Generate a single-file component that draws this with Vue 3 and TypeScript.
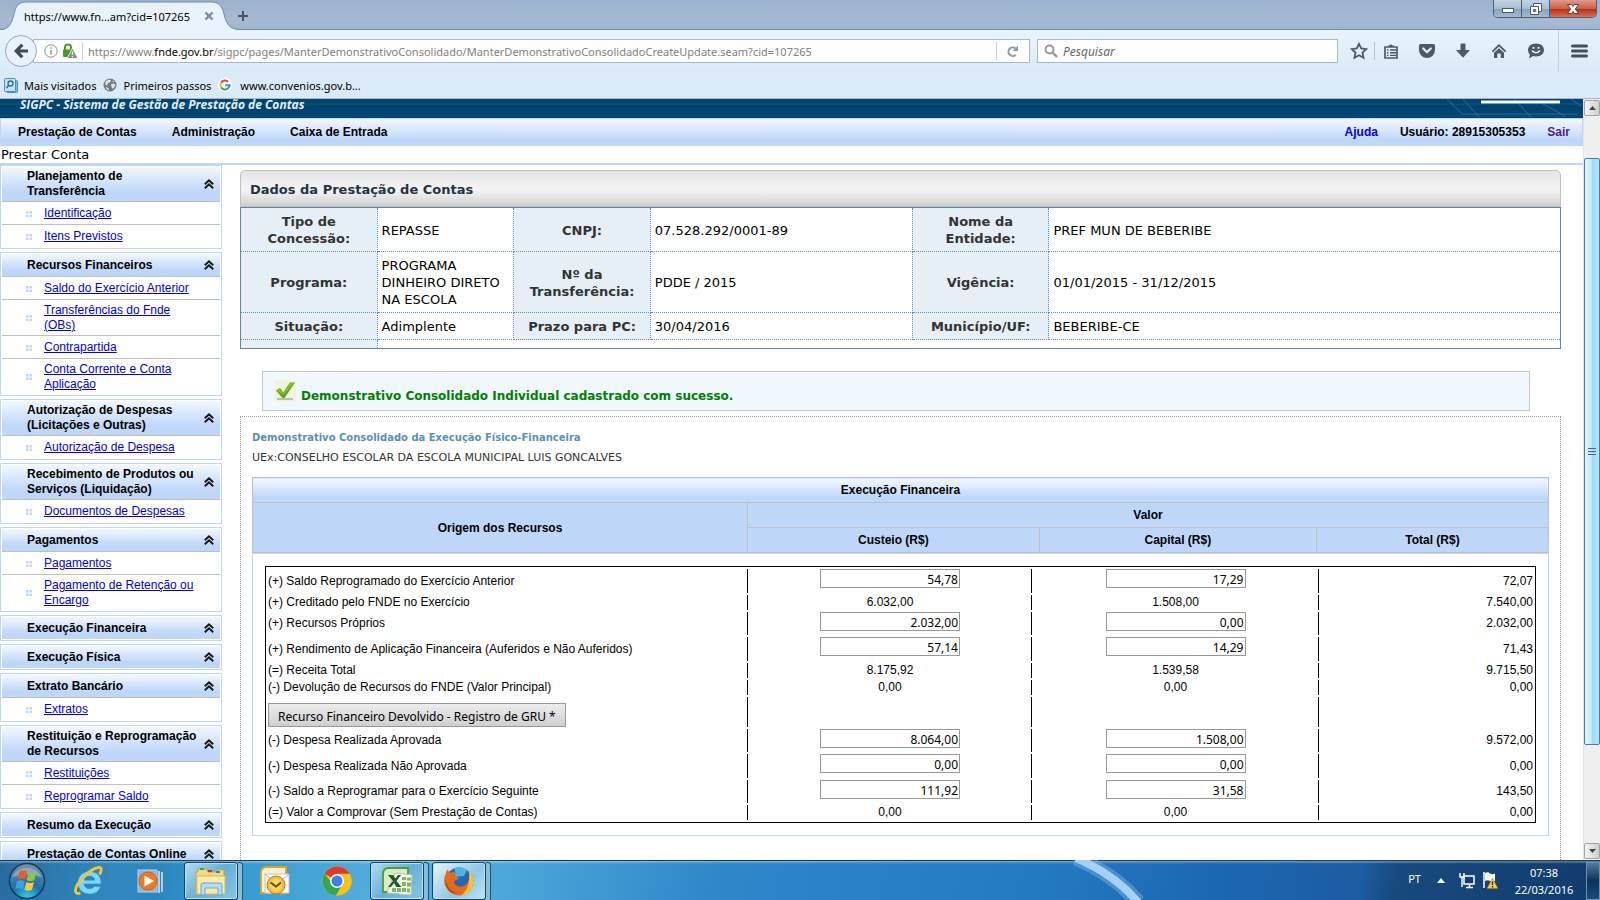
<script setup lang="ts">
import { reactive } from 'vue'

interface MenuGroup { title: string; items: string[] }
interface Amount { text: string; editable: boolean }
interface Row { label: string; size: string; custeio?: Amount; capital?: Amount; total: string; button?: boolean }

const menuGroups: MenuGroup[] = [
  { title: 'Planejamento de Transferência', items: ['Identificação', 'Itens Previstos'] },
  { title: 'Recursos Financeiros', items: ['Saldo do Exercício Anterior', 'Transferências do Fnde (OBs)', 'Contrapartida', 'Conta Corrente e Conta Aplicação'] },
  { title: 'Autorização de Despesas (Licitações e Outras)', items: ['Autorização de Despesa'] },
  { title: 'Recebimento de Produtos ou Serviços (Liquidação)', items: ['Documentos de Despesas'] },
  { title: 'Pagamentos', items: ['Pagamentos', 'Pagamento de Retenção ou Encargo'] },
  { title: 'Execução Financeira', items: [] },
  { title: 'Execução Física', items: [] },
  { title: 'Extrato Bancário', items: ['Extratos'] },
  { title: 'Restituição e Reprogramação de Recursos', items: ['Restituições', 'Reprogramar Saldo'] },
  { title: 'Resumo da Execução', items: [] },
  { title: 'Prestação de Contas Online', items: [] },
]

const field = (text: string): Amount => ({ text, editable: true })
const fixed = (text: string): Amount => ({ text, editable: false })

const rows = reactive<Row[]>([
  { label: '(+) Saldo Reprogramado do Exercício Anterior', size: 'tall', custeio: field('54,78'), capital: field('17,29'), total: '72,07' },
  { label: '(+) Creditado pelo FNDE no Exercício', size: 'short', custeio: fixed('6.032,00'), capital: fixed('1.508,00'), total: '7.540,00' },
  { label: '(+) Recursos Próprios', size: 'medium', custeio: field('2.032,00'), capital: field('0,00'), total: '2.032,00' },
  { label: '(+) Rendimento de Aplicação Financeira (Auferidos e Não Auferidos)', size: 'tall', custeio: field('57,14'), capital: field('14,29'), total: '71,43' },
  { label: '(=) Receita Total', size: 'short', custeio: fixed('8.175,92'), capital: fixed('1.539,58'), total: '9.715,50' },
  { label: '(-) Devolução de Recursos do FNDE (Valor Principal)', size: 'short', custeio: fixed('0,00'), capital: fixed('0,00'), total: '0,00' },
  { label: 'Recurso Financeiro Devolvido - Registro de GRU *', size: 'action', total: '', button: true },
  { label: '(-) Despesa Realizada Aprovada', size: 'medium', custeio: field('8.064,00'), capital: field('1.508,00'), total: '9.572,00' },
  { label: '(-) Despesa Realizada Não Aprovada', size: 'tall', custeio: field('0,00'), capital: field('0,00'), total: '0,00' },
  { label: '(-) Saldo a Reprogramar para o Exercício Seguinte', size: 'medium', custeio: field('111,92'), capital: field('31,58'), total: '143,50' },
  { label: '(=) Valor a Comprovar (Sem Prestação de Contas)', size: 'short', custeio: fixed('0,00'), capital: fixed('0,00'), total: '0,00' },
])
</script>

<template>
  <div class="desktop">
    <header class="titlebar">
      <div class="tab">
        <svg class="tab-shape" viewBox="0 0 240 30" aria-hidden="true">
          <path d="M0 30C10 30 12 22 14 14C16 5 19 2 27 2H211C219 2 222 6 224 14C226 23 229 29.500 238 29.500V30Z" fill="#e9f2fb" />
          <path d="M0 29.500C10 29.500 12 22 14 14C16 5 19 2 27 2H211C219 2 222 6 224 14C226 23 229 29.500 240 29.500" fill="none" stroke="#758ca8" />
        </svg>
        <span class="tab-title">https://www.fn...am?cid=107265</span>
        <button class="tab-close" aria-label="Fechar aba"><svg width="10" height="10" viewBox="0 0 10 10"><path d="M1.500 1.500l7 7M8.500 1.500l-7 7" stroke="#7b8b9c" stroke-width="2.400" /></svg></button>
      </div>
      <button class="new-tab" aria-label="Nova aba"><svg width="12" height="12" viewBox="0 0 12 12"><path d="M6 1v10M1 6h10" stroke="#49535e" stroke-width="2" /></svg></button>
      <div class="window-buttons">
        <button aria-label="Minimizar"><svg width="14" height="14" viewBox="0 0 14 14"><rect x="1.500" y="6.500" width="11" height="4" fill="#fff" stroke="#4d5868" /></svg></button>
        <button aria-label="Restaurar"><svg width="14" height="14" viewBox="0 0 14 14"><path d="M4.500 1.500h8v8h-8z" fill="#fff" stroke="#4d5868" /><path d="M1.500 4.500h8v8h-8z" fill="#fff" stroke="#4d5868" /><path d="M4.500 7.500h2v2h-2z" fill="#8fa5bd" stroke="#4d5868" /></svg></button>
        <button class="close" aria-label="Fechar"><svg width="14" height="14" viewBox="0 0 14 14"><path d="M1.500 2.500h4L7 4.500l1.500-2h4L9.300 7l3.200 4.500h-4L7 9.500l-1.500 2h-4L4.700 7z" fill="#fff" stroke="#5c4350" /></svg></button>
      </div>
    </header>

    <div class="chrome">
      <div class="navbar">
        <button class="back" aria-label="Voltar"><svg width="16" height="16" viewBox="0 0 16 16"><path d="M15 6.500H7l3.500-3.800L8 .8 1 8l7 7.200 2.500-1.900L7 9.500h8z" fill="#404b58" /></svg></button>
        <div class="address">
          <svg width="14" height="14" viewBox="0 0 14 14" class="info"><circle cx="7" cy="7" r="6.200" fill="none" stroke="#8d8d8d" /><path d="M7 6v4.500M7 3.200v1.600" stroke="#8d8d8d" stroke-width="1.500" /></svg>
          <svg width="16" height="16" viewBox="0 0 16 16"><path d="M3 7V4.500a3 3 0 0 1 6 0V7" fill="none" stroke="#489b1f" stroke-width="2" /><rect x="1" y="6.500" width="10" height="7.500" rx="1" fill="#489b1f" /><path d="M10.500 5L16 15.500H5z" fill="#8a8a8a" stroke="#fff" stroke-width=".8" /><path d="M10.500 8.500v3.500M10.500 13v1.300" stroke="#fff" stroke-width="1.200" /></svg>
          <span class="rule"></span>
          <span class="url">https://www.<b>fnde.gov.br</b>/sigpc/pages/ManterDemonstrativoConsolidado/ManterDemonstrativoConsolidadoCreateUpdate.seam?cid=107265</span>
          <span class="rule"></span>
          <button class="reload" aria-label="Recarregar"><svg width="13" height="13" viewBox="0 0 13 13"><path d="M9.800 9.700A4.300 4.300 0 1 1 9.500 3.400" fill="none" stroke="#8c98a6" stroke-width="2" /><path d="M12 .8V6H6.800z" fill="#8c98a6" /></svg></button>
        </div>
        <label class="search">
          <svg width="14" height="14" viewBox="0 0 14 14"><circle cx="5.500" cy="5.500" r="4" fill="none" stroke="#999" stroke-width="2" /><path d="M8.500 8.500l4.500 4.500" stroke="#999" stroke-width="2.400" /></svg>
          <input type="text" placeholder="Pesquisar" aria-label="Pesquisar">
        </label>
        <div class="tools">
          <button class="star" aria-label="Favoritar"><svg width="18" height="18" viewBox="0 0 18 18"><path d="M9 1.800l2.200 4.700 5 .6-3.700 3.500 1 5.100L9 13.200l-4.500 2.500 1-5.100L1.800 7.100l5-.6z" fill="none" stroke="#4d5966" stroke-width="1.800" /></svg></button>
          <button aria-label="Favoritos"><svg width="16" height="16" viewBox="0 0 16 16"><path d="M2 4h12v11H2z" fill="none" stroke="#4d5966" stroke-width="1.700" /><path d="M5 4V2.500h1.500a1.600 1.600 0 0 1 3 0H11V4z" fill="#4d5966" /><path d="M4 7h1.500M7 7h6M4 9.700h1.500M7 9.700h6M4 12.400h1.500M7 12.400h6" stroke="#4d5966" stroke-width="1.400" /></svg></button>
          <button aria-label="Pocket"><svg width="16" height="16" viewBox="0 0 16 16"><path d="M1.500 1h13q1.500 0 1.500 1.500V7A8 8 0 0 1 0 7V2.500Q0 1 1.500 1z" fill="#4d5966" /><path d="M4.200 5.500L8 9.200l3.800-3.700" fill="none" stroke="#e4eef8" stroke-width="2.200" stroke-linecap="round" stroke-linejoin="round" /></svg></button>
          <button aria-label="Downloads"><svg width="16" height="16" viewBox="0 0 16 16"><path d="M5.500 1.500q0-1 1-1h3q1 0 1 1V7H15L8 14.800 1 7h4.500z" fill="#4d5966" /></svg></button>
          <button aria-label="Início"><svg width="16" height="16" viewBox="0 0 16 16"><path d="M8 1L.8 8l1.200 1.200L8 3.600l6 5.600L15.200 8z" fill="#4d5966" /><path d="M8 5.200L3 9.800V15h3.300v-4.500h3.400V15H13V9.800z" fill="#4d5966" /></svg></button>
          <button aria-label="Conversas"><svg width="18" height="16" viewBox="0 0 18 16"><path d="M9 .5c4.600 0 8 2.800 8 6.500s-3.400 6.500-8 6.500c-1 0-2-.1-2.800-.4L2 15.500l1-3.900C1.700 10.400 1 8.800 1 7 1 3.300 4.400.5 9 .5z" fill="#4d5966" /><path d="M5 7.500q4 4.500 8 0" fill="none" stroke="#e4eef8" stroke-width="1.600" /><path d="M5.500 4.800h2M10.500 4.800h2" stroke="#e4eef8" stroke-width="1.800" /></svg></button>
        </div>
        <button class="menu-button" aria-label="Menu"><svg width="17" height="14" viewBox="0 0 17 14"><path d="M1.500 2h14M1.500 7h14M1.500 12h14" stroke="#45505c" stroke-width="3" stroke-linecap="round" /></svg></button>
      </div>
      <nav class="bookmarks" aria-label="Favoritos">
        <a href="#"><svg width="14" height="15" viewBox="0 0 14 15"><rect x="2.500" y="2.500" width="11" height="12" rx="1" fill="#7cb5d6" stroke="#4d8fb5" /><rect x=".5" y=".5" width="11" height="13" rx="1" fill="#c5e1f0" stroke="#4d8fb5" /><circle cx="6.500" cy="5.500" r="2.500" fill="none" stroke="#2f6d98" stroke-width="1.300" /><path d="M4.800 7.300L2.500 10" stroke="#2f6d98" stroke-width="1.500" /></svg><span>Mais visitados</span></a>
        <a href="#"><svg width="14" height="14" viewBox="0 0 14 14"><circle cx="7" cy="7" r="6.500" fill="#707880" /><path d="M3 3l3-1.500 2 1-1 2-2 .5-1 2.500-2-1zM8 6l3-.5 1.500 2L10 11 8.500 9zM3 9l2.500 1L6 12.500 3.500 11zM9 2.500l2.500 1-1 1z" fill="#dfe5ea" /></svg><span>Primeiros passos</span></a>
        <a href="#" class="google"><svg width="14" height="14" viewBox="0 0 14 14"><circle cx="7" cy="7" r="7" fill="#fff" /><path d="M10.200 3.800A4.500 4.500 0 0 0 3.100 4.750" fill="none" stroke="#ea4335" stroke-width="2" /><path d="M3.100 4.750a4.500 4.500 0 0 0 0 4.500" fill="none" stroke="#fbbc05" stroke-width="2" /><path d="M3.100 9.250a4.500 4.500 0 0 0 6.800 1.200" fill="none" stroke="#34a853" stroke-width="2" /><path d="M9.900 10.450A4.500 4.500 0 0 0 11.500 7.200H7.200" fill="none" stroke="#4285f4" stroke-width="2" /></svg><span>www.convenios.gov.b...</span></a>
      </nav>
    </div>

    <div class="viewport">
      <div class="page">
        <div class="banner">
          <span>SIGPC - Sistema de Gestão de Prestação de Contas</span>
          <svg width="150" height="19" viewBox="0 0 150 19" aria-hidden="true"><path d="M14 0l15 15h115M30 0l16 18M81 0l17 18M138 0l10 7M110 5l22 12" fill="none" stroke="#4d83a5" stroke-opacity=".6" /><path d="M48 3h79" stroke="#f4fbfd" stroke-width="3" /></svg>
        </div>
        <nav class="topmenu" aria-label="Principal">
          <button>Prestação de Contas</button>
          <button>Administração</button>
          <button>Caixa de Entrada</button>
          <a class="help" href="#">Ajuda</a>
          <span>Usuário: 28915305353</span>
          <a class="leave" href="#">Sair</a>
        </nav>
        <div class="crumb">Prestar Conta</div>

        <div class="columns">
          <aside class="sidebar">
            <section v-for="group in menuGroups" :key="group.title" class="group">
              <h2>
                <span>{{ group.title }}</span>
                <svg width="10" height="10" viewBox="0 0 10 10" aria-hidden="true"><path d="M.8 5.200L5 1.300l4.200 3.900M.8 9.200L5 5.300l4.200 3.900" fill="none" stroke="#151515" stroke-width="1.900" /></svg>
              </h2>
              <ul v-if="group.items.length">
                <li v-for="item in group.items" :key="item">
                  <svg width="6" height="6" viewBox="0 0 6 6" aria-hidden="true"><path d="M0 0h2.500v2.500H0zM3.500 0H6v2.500H3.500zM0 3.500h2.500V6H0zM3.500 3.500H6V6H3.500z" fill="#bed6f8" /></svg>
                  <a href="#">{{ item }}</a>
                </li>
              </ul>
            </section>
          </aside>

          <main>
            <h1>Dados da Prestação de Contas</h1>
            <table class="facts">
              <colgroup><col class="c-label"><col class="c-label"><col class="c-label"><col class="c-mid"><col class="c-label"><col></colgroup>
              <tbody>
                <tr><th scope="row">Tipo de Concessão:</th><td>REPASSE</td><th scope="row">CNPJ:</th><td>07.528.292/0001-89</td><th scope="row">Nome da Entidade:</th><td>PREF MUN DE BEBERIBE</td></tr>
                <tr><th scope="row">Programa:</th><td>PROGRAMA DINHEIRO DIRETO NA ESCOLA</td><th scope="row">Nº da Transferência:</th><td>PDDE / 2015</td><th scope="row">Vigência:</th><td>01/01/2015 - 31/12/2015</td></tr>
                <tr><th scope="row">Situação:</th><td>Adimplente</td><th scope="row">Prazo para PC:</th><td>30/04/2016</td><th scope="row">Município/UF:</th><td>BEBERIBE-CE</td></tr>
                <tr class="blank"><th></th><td colspan="5"></td></tr>
              </tbody>
            </table>

            <div class="message" role="status">
              <svg width="22" height="22" viewBox="0 0 22 22" aria-hidden="true"><rect width="22" height="22" fill="#eef5dc" /><path d="M3 19h16" stroke="#b9c3a5" stroke-width="2" /><path d="M2 10.500l4-2.500 3.200 4.500L16 2.500h5L10.500 18H8.500z" fill="#5fa51c" /><path d="M3 10.500l3-1.700 3.300 4.700L16.500 3h3L9.500 15z" fill="#86c434" /></svg>
              <span>Demonstrativo Consolidado Individual cadastrado com sucesso.</span>
            </div>

            <section class="statement">
              <h3>Demonstrativo Consolidado da Execução Físico-Financeira</h3>
              <p>UEx:CONSELHO ESCOLAR DA ESCOLA MUNICIPAL LUIS GONCALVES</p>
              <table class="heads">
                <colgroup><col class="h-source"><col class="h-custeio"><col class="h-capital"><col></colgroup>
                <thead>
                  <tr><th colspan="4" class="caption">Execução Financeira</th></tr>
                  <tr><th rowspan="2">Origem dos Recursos</th><th colspan="3">Valor</th></tr>
                  <tr><th>Custeio (R$)</th><th>Capital (R$)</th><th>Total (R$)</th></tr>
                </thead>
              </table>
              <div class="sheet">
                <table class="amounts">
                  <colgroup><col><col class="a-custeio"><col class="a-capital"><col class="a-total"></colgroup>
                  <tbody>
                    <tr v-for="row in rows" :key="row.label" :class="row.size">
                      <td><button v-if="row.button" class="gru">{{ row.label }}</button><template v-else>{{ row.label }}</template></td>
                      <td class="value" :class="{ entry: row.custeio?.editable }"><input v-if="row.custeio?.editable" v-model="row.custeio.text" type="text" :aria-label="row.label + ' - Custeio'"><template v-else>{{ row.custeio?.text }}</template></td>
                      <td class="value" :class="{ entry: row.capital?.editable }"><input v-if="row.capital?.editable" v-model="row.capital.text" type="text" :aria-label="row.label + ' - Capital'"><template v-else>{{ row.capital?.text }}</template></td>
                      <td class="value total">{{ row.total }}</td>
                    </tr>
                  </tbody>
                </table>
              </div>
            </section>
          </main>
        </div>
      </div>
      <div class="scrollbar" aria-hidden="true">
        <span class="arrow"><svg width="7" height="4" viewBox="0 0 7 4"><path d="M0 4l3.500-4L7 4z" fill="#444" /></svg></span>
        <div class="track"><div class="thumb"><i></i><i></i><i></i></div></div>
        <span class="arrow"><svg width="7" height="4" viewBox="0 0 7 4"><path d="M0 0l3.500 4L7 0z" fill="#444" /></svg></span>
      </div>
    </div>

    <footer class="taskbar">
      <svg class="beam" width="100" height="40" viewBox="0 0 100 40" aria-hidden="true"><path d="M4-2Q42 14 66 42" fill="none" stroke="#9cc8f3" stroke-opacity=".35" stroke-width="15" /><path d="M4-2Q42 14 66 42" fill="none" stroke="#a5d0f8" stroke-width="8" /></svg>
      <button class="start" aria-label="Iniciar">
        <svg width="38" height="38" viewBox="0 0 38 38"><defs><radialGradient id="orb" cx=".5" cy="1" r="1"><stop offset="0" stop-color="#35d5f5" /><stop offset=".45" stop-color="#1b6da8" /><stop offset="1" stop-color="#7c93a8" /></radialGradient></defs><circle cx="19" cy="19" r="17.500" fill="url(#orb)" stroke="#16395c" stroke-width="1.500" /><path d="M4 15a16 14 0 0 1 30 0q-15-5-30 0z" fill="#fff" opacity=".3" /><path d="M11.500 9.500q4-2 7.500 0l-1.800 8q-4-2-7.800 0z" fill="#ee5a24" /><path d="M20.500 10.200q4 2 7.800 0l-2 8q-4 2-7.600 0z" fill="#8cc63e" /><path d="M9 19.200q4-2 7.800 0l-2 8q-3.800-2-7.600 0z" fill="#38a5e8" /><path d="M18.300 20q3.800 2 7.700 0l-2 7.800q-4 2-7.600 0z" fill="#fdc82f" /></svg>
      </button>
      <button class="task" aria-label="Internet Explorer">
        <svg width="34" height="32" viewBox="0 0 34 32"><path d="M29 19H12c.4 3 2.800 4.700 5.700 4.700 2 0 3.500-.8 4.400-2.200h6.300C26.800 26.500 23 29 17.700 29 10.800 29 6 24.500 6 17.700 6 11 11 6.500 17.700 6.500c7.500 0 11.700 5 11.300 12.500zM12.200 15.200h10.600c-.4-2.600-2.500-4.100-5.200-4.100s-4.800 1.500-5.400 4.100z" fill="#7fd8fa" stroke="#2f97d6" stroke-width=".7" /><path d="M27.500 9.500C30 5 30 2 26.500 2.500 20 3.500 10 11.500 5.500 19.500 2 26 3 30 8.500 28" fill="none" stroke="#f5c431" stroke-width="2.800" /></svg>
      </button>
      <button class="task" aria-label="Windows Media Player">
        <svg width="32" height="30" viewBox="0 0 32 30"><path d="M27 6v20M24 5v22" stroke="#b4cfe5" stroke-width="2" /><rect x="3" y="4" width="19" height="22" fill="#86b3d6" stroke="#b9d3e7" /><circle cx="13" cy="15" r="9" fill="#f17a1c" stroke="#d85d0f" /><path d="M9.500 9.500l9.500 5.500-9.500 5.500z" fill="#fff" /></svg>
      </button>
      <button class="task open" aria-label="Windows Explorer">
        <svg width="34" height="30" viewBox="0 0 34 30"><path d="M4 6V3h8l2 3h8l1-2h7v24H2V6z" fill="#f3d981" stroke="#c9a84c" /><rect x="6" y="2" width="4" height="2" fill="#3da23d" /><rect x="14" y="4" width="4" height="2" fill="#c8352b" /><rect x="22" y="5" width="4" height="2" fill="#3b7fc4" /><path d="M3 10h28v18H3z" fill="#fbeaa9" stroke="#d5b75f" /><path d="M7 29V19q0-2 2-2h17q2 0 2 2v10h-4v-7H11v7z" fill="#b4ddf3" stroke="#65a7cf" /></svg>
      </button>
      <button class="task" aria-label="Outlook">
        <svg width="34" height="32" viewBox="0 0 34 32"><path d="M3 8q0-6 6-6h19v26H3z" fill="#fdf1d3" stroke="#e8a01c" stroke-width="1.800" /><path d="M7 9h24v19H7z" fill="#fff" stroke="#c2c2c2" /><path d="M7 9l12 10L31 9" fill="none" stroke="#aaa" /><circle cx="18" cy="20" r="9" fill="#f7bd39" stroke="#b97a10" /><circle cx="18" cy="20" r="6.500" fill="#fbd368" /><path d="M12.500 17.500l5.500 4 5-4" fill="none" stroke="#6d4a08" stroke-width="1.800" /></svg>
      </button>
      <button class="task" aria-label="Chrome">
        <svg width="30" height="30" viewBox="0 0 30 30"><circle cx="15" cy="15" r="14.500" fill="#fbc116" /><path d="M15 15L2.500 7.700A14.500 14.500 0 0 1 27.600 7.800H15z" fill="#e2382b" /><path d="M2.500 7.700A14.500 14.500 0 0 0 14 29.500l6.200-11L15 15l-6 1z" fill="#2da94f" /><path d="M15 8h12.600A14.500 14.500 0 0 1 14 29.500l7.300-11z" fill="#fbc116" /><circle cx="15" cy="15" r="7" fill="#fff" /><circle cx="15" cy="15" r="5.500" fill="#3f7de8" /></svg>
      </button>
      <button class="task open" aria-label="Excel">
        <svg width="34" height="32" viewBox="0 0 34 32"><path d="M3 9q0-6 6-6h19v24H3z" fill="#d8ecc8" stroke="#4c9c2e" stroke-width="1.800" /><path d="M15 8l17 2-1 20-24-2z" fill="#f7faf4" stroke="#b3c3a6" /><path d="M22 12h4v3h-4zM27 12.500h4v3h-4zM22 17h4v4h-4zM27 17.500h4v4h-4zM12 23h4v4h-4zM17 23h4v4h-4zM22 23h4v4h-4zM27 23.500h3v4h-3z" fill="#7fb85f" /><path d="M8 10h5l2.500 3.500L18 10h3l-4.500 6 5 6h-5L14 18l-3 4H8l5-6z" fill="#1f5c23" /></svg>
      </button>
      <button class="task open active" aria-label="Firefox">
        <svg width="34" height="32" viewBox="0 0 34 32"><circle cx="17" cy="15.500" r="13" fill="#2467b5" /><path d="M13 3q7-2 12 2l-3 6-9 1z" fill="#49b6e6" /><path d="M27 6c5 5 5.500 12 2 18C25 30.500 16 32.500 9 28 2.500 23.500.5 16 3.500 9.500L5 4.500 8.500 8c2-1.500 4-1.500 6-1l-2.500 4c1 1.500 3 1 5 1.500-1 2.500-3 3-5 3.500 0 4 4 6.500 8.500 5.500 5-1 8-7 6.500-15.500z" fill="#e66a1c" /><path d="M27 6c5 5 5.500 12 2 18-2.500 4-6 6-10 6.500 6-4 9.500-13 8-24.500z" fill="#fbc02d" /><path d="M4 12c-1 7 3 14 11 16-7 1-13-6-11-16z" fill="#b9341a" /></svg>
      </button>
      <div class="tray">
        <span class="lang">PT</span>
        <svg width="8" height="5" viewBox="0 0 8 5" aria-hidden="true"><path d="M0 5l4-5 4 5z" fill="#fff" /></svg>
        <svg class="network" width="16" height="16" viewBox="0 0 16 16" aria-hidden="true"><path d="M5 3h10v8H5z" fill="#123f70" stroke="#fff" stroke-width="1.500" /><path d="M7 14.500h7M10.500 11v3" stroke="#fff" stroke-width="1.500" /><path d="M1 0v4h4V0M3 4v10" fill="none" stroke="#fff" stroke-width="1.400" /></svg>
        <svg width="16" height="17" viewBox="0 0 16 17" aria-hidden="true"><path d="M2 0v16" stroke="#fff" stroke-width="1.500" /><path d="M3 1q3-1.500 5 .5 3 1.500 5 0V9q-3 1.500-5 0-2-1.500-5 0z" fill="#fff" /><path d="M10.500 6L16 16.500H5z" fill="#fdd01d" stroke="#9f7606" stroke-width=".6" /><path d="M10.500 9.500v3.500M10.500 14v1.500" stroke="#222" stroke-width="1.400" /></svg>
        <div class="clock"><span>07:38</span><span>22/03/2016</span></div>
        <button class="show-desktop" aria-label="Mostrar área de trabalho"></button>
      </div>
    </footer>
  </div>
</template>

<style>
body { margin: 0; }
</style>

<style scoped>
* { box-sizing: border-box; }
button { font: inherit; color: inherit; background: none; border: 0; padding: 0; margin: 0; }
svg { display: block; flex: none; }
.desktop { height: 100vh; display: flex; flex-direction: column; overflow: hidden; font-family: "Noto Sans", "Open Sans", sans-serif; font-size: 11px; color: #000; }

.titlebar { position: relative; height: 30px; flex: none; display: flex; align-items: center; background: linear-gradient(#9bb2cf, #a6bad1 70%, #a0b7d0); border-bottom: 1px solid #758ca8; }
.tab { position: relative; width: 240px; height: 30px; display: flex; align-items: center; gap: 14px; padding: 3px 0 0 24px; }
.tab-shape { position: absolute; left: 0; top: 0; width: 240px; height: 30px; }
.tab-title, .tab-close { position: relative; white-space: nowrap; }
.new-tab { margin: 3px 0 0 -3px; }
.window-buttons { margin: 0 3px auto auto; display: flex; height: 18px; border: 1px solid #4b5f7a; border-top: 0; border-radius: 0 0 5px 5px; overflow: hidden; }
.window-buttons button { width: 28px; display: flex; justify-content: center; align-items: center; border-right: 1px solid #4b5f7a; background: linear-gradient(#c5d3e3, #a9bdd3 50%, #879fb9 51%, #a5bbd3); }
.window-buttons .close { width: 46px; border: 0; background: linear-gradient(#dd9c8c, #cd5f46 50%, #b52b12 51%, #d9705a); }

.chrome { flex: none; height: 69px; background: linear-gradient(#e9f3fc, #dbeaf8 60%); border-bottom: 1px solid #a9b8c8; }
.navbar { height: 42px; display: flex; align-items: center; padding-left: 5px; }
.back { z-index: 1; width: 32px; height: 32px; flex: none; border: 1px solid #93a7bd; border-radius: 50%; background: #e9f2fb; display: flex; align-items: center; justify-content: center; }
.address { flex: 1; min-width: 0; height: 24px; margin-left: -4px; padding: 0 10px; display: flex; align-items: center; background: #fff; border: 1px solid #a8b9ca; gap: 4px; }
.rule { width: 1px; height: 18px; flex: none; background: #ccd0d4; }
.url { flex: 1; min-width: 0; overflow: hidden; white-space: nowrap; color: #808080; padding-left: 1px; }
.url b { font-weight: 400; color: #000; }
.reload { margin-left: 5px; }
.search { width: 301px; height: 24px; margin-left: 7px; padding: 0 6px; display: flex; align-items: center; gap: 5px; background: #fff; border: 1px solid #a8b9ca; }
.search input { flex: 1; min-width: 0; border: 0; outline: 0; padding: 0; background: none; font: italic 12px "Noto Sans", sans-serif; }
.search input::placeholder { color: #666; opacity: 1; }
.tools { display: flex; align-items: center; gap: 20px; margin: 0 13px 0 12px; }
.star { margin-right: -12px; padding-right: 6px; border-right: 1px solid #b4c0cc; }
.menu-button { height: 42px; border-left: 1px solid #c3d0de; padding: 0 12px; }
.bookmarks { height: 26px; display: flex; align-items: center; padding-left: 4px; gap: 7px; }
.bookmarks a { display: flex; align-items: center; gap: 6px; color: #000; text-decoration: none; white-space: nowrap; }
.bookmarks .google { gap: 8px; }

.viewport { flex: 1; min-height: 0; display: flex; background: #fff; }
.page { flex: 1; min-width: 0; overflow: hidden; }
.banner { height: 19px; display: flex; justify-content: space-between; align-items: flex-end; background: repeating-linear-gradient(#004470 0 4px, #114f7c 5px, #004470 6px 12px); padding-left: 20px; }
.banner span { font: italic bold 12px/12px "Open Sans", sans-serif; color: #e4eef5; padding-bottom: 7px; white-space: nowrap; }
.topmenu { height: 28px; display: flex; align-items: center; padding: 0 12px 2px 17px; border: 1px solid #bed6f8; border-bottom: 0; background: linear-gradient(#f2f7ff, #bed6f8 80%); font: bold 12px "Liberation Sans", Arial, sans-serif; white-space: nowrap; }
.topmenu button + button { margin-left: 35px; }
.topmenu a { text-decoration: none; }
.topmenu .help { margin: 0 22px 0 auto; color: #00e; }
.topmenu .leave { margin-left: 22px; color: #551a8b; }
.crumb { height: 18px; border-bottom: 2px solid #bed6f8; font: 13px/18px "DejaVu Sans", Verdana, sans-serif; padding-left: 1px; box-sizing: content-box; height: 17px; }
.columns { display: flex; align-items: flex-start; }

.sidebar { width: 222px; flex: none; display: flex; flex-direction: column; gap: 3px; font: 12px/15px "Liberation Sans", Arial, sans-serif; }
.group { border: 1px solid #bed6f8; padding: 1px; }
.group h2 { margin: 0; min-height: 22px; display: flex; align-items: center; justify-content: space-between; padding: 2px 6px 2px 25px; background: linear-gradient(#f2f7ff, #bed6f8 75%); font: inherit; font-weight: bold; }
.group h2 span { max-width: 174px; }
.group ul { list-style: none; margin: 0; padding: 0; }
.group li { min-height: 23px; border-top: 1px solid #c0c0c0; display: flex; align-items: center; gap: 12px; padding: 3px 20px 2px 24px; }
.group a { color: #00e; text-decoration: underline; }

main { flex: 1; min-width: 0; padding: 5px 22px 0 18px; font: 13px/17px "DejaVu Sans", Verdana, sans-serif; }
h1 { margin: 0; height: 37px; border: 1px solid #c0c0c0; border-radius: 5px 5px 0 0; padding-left: 9px; background: linear-gradient(#e4e4e4, #f3f3f3 50%, #f0f0f0 60%, #cfcfcf); font: bold 13px/38px "DejaVu Sans", Verdana, sans-serif; color: #1e3447; }
.facts { width: 100%; table-layout: fixed; border-collapse: collapse; border: 1px solid #5f889b; }
.c-label { width: 10.35%; }
.c-mid { width: 19.85%; }
.facts th, .facts td { border: 1px dotted #5d8fb5; padding: 5px 4px 4px; }
.facts th { background: #e6eff5; color: #333; text-align: center; }
.facts td { text-align: left; }
.facts .blank th, .facts .blank td { padding: 0; height: 9px; }
.message { margin: 22px 31px 0 22px; height: 40px; border: 1px solid #c5c9cd; background: #f0f7ff; color: #008000; font-size: 12px; font-weight: bold; display: flex; align-items: center; gap: 5px; padding-left: 11px; }
.message span { padding-top: 10px; }
.statement { margin-top: 5px; padding: 12px 11px 40px; border: 1px dotted #999; height: 500px; }
.statement h3 { margin: 0; font-size: 10px; line-height: 17px; color: #5a90b5; }
.statement p { margin: 3px 0 11px; font-size: 11px; line-height: 17px; color: #333; }
.heads { width: 100%; table-layout: fixed; border-collapse: collapse; background: #bed6f8; font: bold 12px/14px "Liberation Sans", Arial, sans-serif; }
.heads th { height: 25px; padding: 0; border: 1px solid #c0c0c0; }
.heads .caption { background: linear-gradient(#f2f7ff, #bed6f8 80%); }
.h-source { width: 38.2%; }
.h-custeio { width: 22.5%; }
.h-capital { width: 21.4%; }
.sheet { border: 1px solid #bed6f8; padding: 12px; }
.amounts { width: 100%; table-layout: fixed; border-collapse: separate; border-spacing: 2px; border: 1px solid #000; font: 12px/15px "Liberation Sans", Arial, sans-serif; }
.a-custeio { width: 282px; }
.a-capital { width: 285px; }
.a-total { width: 215px; }
.amounts td { padding: 0; }
.short td { height: 15px; }
.medium td { height: 23px; }
.tall td { height: 24px; }
.action td { height: 30px; vertical-align: bottom; }
.amounts .value { border-left: 1px solid #000; text-align: center; padding-left: 3px; }
.amounts .total { text-align: right; }
.amounts .entry { vertical-align: top; }
.amounts input { display: block; width: 140px; height: 19px; margin: 0 auto; border: 1px solid #999; background: #fff; padding: 2px 1px 0; text-align: right; font: 12px "Noto Sans", Tahoma, sans-serif; }
.gru { display: block; height: 24px; padding: 3px 9px 0; border: 1px solid #999; background: linear-gradient(#ececec, #cfcfcf); font: 12px "Noto Sans", Tahoma, sans-serif; }

.scrollbar { width: 17px; flex: none; display: flex; flex-direction: column; background: #efefef; border-left: 1px solid #e4e4e4; padding: 1px 0; }
.arrow { height: 16px; flex: none; display: flex; align-items: center; justify-content: center; border: 1px solid #a3a3a3; border-radius: 2px; background: linear-gradient(90deg, #f4f4f4, #cfcfcf); }
.track { flex: 1; padding: 42px 0 98px; }
.thumb { height: 100%; display: flex; flex-direction: column; align-items: center; justify-content: center; gap: 2px; border: 1px solid #3c7fb1; border-radius: 2px; background: linear-gradient(90deg, #e0f3fd, #c8e8f9 45%, #a0d8f6 50%, #b9e3f8); }
.thumb i { width: 8px; height: 1px; background: #33708f; }

.taskbar { position: relative; height: 40px; flex: none; display: flex; align-items: center; padding-left: 8px; border-top: 1px solid #1e3f59; background: linear-gradient(rgba(255,255,255,.35), rgba(255,255,255,0) 3px), linear-gradient(100deg, #286b9f 0, #3188be 7%, #2c86be 10%, #3399cf 14%, #55aedb 24%, #4ba6d9 32%, #2d87c9 45%, #237ac1 65%, #1c67b2 76%, #1c5ca2 85%, #184a7f 87%, #123b6b 100%); }
.beam { position: absolute; left: 67%; top: -1px; }
.start { width: 38px; }
.task { position: relative; width: 58px; height: 38px; margin-left: 4px; display: flex; align-items: center; justify-content: center; border: 1px solid transparent; }
.start + .task { margin-left: 14px; }
.open { width: 54px; margin-right: 4px; border: 1px solid #1c415c; border-radius: 3px; background: linear-gradient(135deg, #b5dbef, #65b0d8 50%, #8ac4e2); box-shadow: inset 0 0 0 1px #b8dff0; }
.active { background: linear-gradient(135deg, #e6f4fa, #8dc8e5 60%, #c3e3f1); }
.open::after { content: ""; position: absolute; left: 53px; top: -1px; width: 4px; height: 38px; border: 1px solid #28526c; border-left: 0; border-radius: 0 3px 3px 0; background: #85bedd; }
.tray { margin-left: auto; align-self: stretch; display: flex; align-items: center; color: #fff; }
.lang { margin: 0 16px 4px 0; }
.network { margin: 0 7px 0 14px; }
.clock { width: 84px; margin-left: 4px; display: flex; flex-direction: column; align-items: center; line-height: 17px; }
.show-desktop { width: 14px; height: 38px; border: 1px solid #6f93b3; background: linear-gradient(#52799c, #0d3159 50%, #1b4c80); }
</style>
